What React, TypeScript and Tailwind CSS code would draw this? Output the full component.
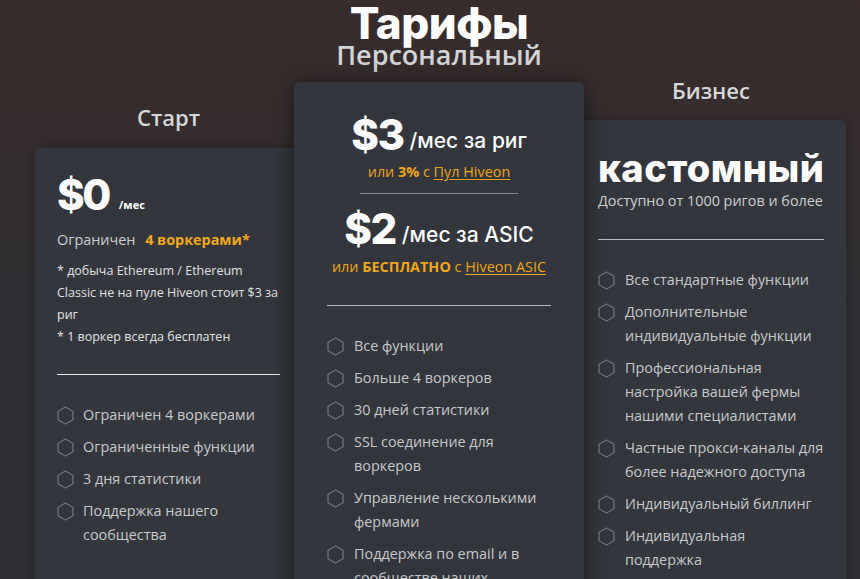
import React from 'react';

const Hex: React.FC = () => (
    <svg width="17" height="19" viewBox="0 0 17 19" className="shrink-0 mt-[3px]">
        <polygon points="8.5,1 16,5.2 16,13.8 8.5,18 1,13.8 1,5.2" fill="none" stroke="#74777d" strokeWidth="1.3" strokeLinejoin="round" />
    </svg>
);

const Features: React.FC<{ items: string[]; gap: string }> = ({ items, gap }) => (
    <ul className="flex flex-col gap-2">
        {items.map((t, i) => (
            <li key={i} className={`flex items-start ${gap} text-[14.4px] leading-6 text-[#c9cacc]`}>
                <Hex />
                <span>{t}</span>
            </li>
        ))}
    </ul>
);

const heading = { fontFamily: 'Inter, "Noto Sans", sans-serif' };

export default function App() {
    return (
        <div
            className="h-[579px] w-[860px] overflow-hidden bg-[linear-gradient(180deg,#382c2c_0%,#352d2e_25%,#2f3034_55%,#2e3034_100%)]"
            style={{ fontFamily: '"Open Sans", "Noto Sans", sans-serif' }}
        >
            <h1 className="pl-[18px] pt-[1px] text-center text-[44px] leading-[44px] font-extrabold text-white tracking-[-0.5px] -mb-[5px]" style={heading}>
                Тарифы
            </h1>

            <div className="flex items-start pl-[35px]">
                {/* Старт */}
                <div className="w-[267px] mt-[62px] flex flex-col">
                    <div className="text-center text-[22px] leading-[30px] font-semibold text-[#d6d7d9] mb-[16px]">Старт</div>
                    <div className="bg-[#33363c] rounded-md px-[22px] pt-[25px] pb-10 shadow-[0_0_14px_rgba(0,0,0,0.25)] h-[460px]">
                        <div className="flex items-end">
                            <span className="text-[42px] leading-[44px] font-extrabold text-white tracking-[-2.5px]" style={heading}>$0</span>
                            <span className="ml-[10px] mb-[4px] text-[11px] font-bold text-white">/мес</span>
                        </div>
                        <div className="mt-[13px] text-[14.4px] leading-5 text-[#cfd0d2]">
                            Ограничен <span className="ml-[6px] font-bold text-[#f7a81a]">4 воркерами*</span>
                        </div>
                        <div className="mt-[10px] text-[12.5px] leading-[22px] text-[#e2e3e4]">
                            <p>* добыча Ethereum / Ethereum Classic не на пуле Hiveon стоит $3 за риг</p>
                            <p>* 1 воркер всегда бесплатен</p>
                        </div>
                        <div className="mt-[26px] border-t border-[#e6e6e6]" />
                        <div className="mt-[28px]">
                            <Features
                                gap="gap-[9px]"
                                items={['Ограничен 4 воркерами', 'Ограниченные функции', '3 дня статистики', 'Поддержка нашего сообщества']}
                            />
                        </div>
                    </div>
                </div>

                {/* Персональный */}
                <div className="w-[290px] -ml-2 relative z-10 flex flex-col">
                    <div className="text-center text-[27px] leading-[30px] font-semibold text-[#d4d5d7] mb-[12px]">Персональный</div>
                    <div className="bg-[#33363c] rounded-md px-[33px] pt-[31px] pb-10 shadow-[0_0_22px_rgba(0,0,0,0.55)] h-[540px]">
                        <div className="flex items-end justify-center">
                            <span className="text-[42px] leading-[44px] font-extrabold text-white tracking-[-1.5px]" style={heading}>$3</span>
                            <span className="ml-[6px] mb-[4px] text-[21px] leading-6 font-medium text-white" style={heading}>/мес за риг</span>
                        </div>
                        <div className="mt-[6px] text-center text-[14.4px] leading-[18px] text-[#f2a516]">
                            или <b>3%</b> с <span className="underline underline-offset-2">Пул Hiveon</span>
                        </div>
                        <div className="mt-[12px] mx-auto w-[158px] border-t border-[#8a8b8e]" />
                        <div className="mt-[13px] flex items-end justify-center">
                            <span className="text-[42px] leading-[44px] font-extrabold text-white tracking-[-1.5px]" style={heading}>$2</span>
                            <span className="ml-[6px] mb-[4px] text-[21px] leading-6 font-medium text-white" style={heading}>/мес за ASIC</span>
                        </div>
                        <div className="mt-[7px] text-center text-[14.4px] leading-[18px] text-[#f2a516]">
                            или <b>БЕСПЛАТНО</b> с <span className="underline underline-offset-2">Hiveon ASIC</span>
                        </div>
                        <div className="mt-[29px] border-t border-[#b9babc]" />
                        <div className="mt-[28px]">
                            <Features
                                gap="gap-[10px]"
                                items={[
                                    'Все функции',
                                    'Больше 4 воркеров',
                                    '30 дней статистики',
                                    'SSL соединение для воркеров',
                                    'Управление несколькими фермами',
                                    'Поддержка по email и в сообществе наших пользователей',
                                ]}
                            />
                        </div>
                    </div>
                </div>

                {/* Бизнес */}
                <div className="w-[270px] -ml-2 mt-[35px] flex flex-col">
                    <div className="text-center text-[22px] leading-[30px] font-semibold text-[#d6d7d9] mb-[15px]">Бизнес</div>
                    <div className="bg-[#33363c] rounded-md px-[22px] pt-[28px] pb-10 shadow-[0_0_14px_rgba(0,0,0,0.25)] h-[500px]">
                        <div className="text-[38px] leading-[40px] font-extrabold text-white tracking-[0.5px]" style={heading}>кастомный</div>
                        <div className="mt-[3px] text-[14.4px] leading-5 text-[#cfd0d2]">Доступно от 1000 ригов и более</div>
                        <div className="mt-[28px] border-t border-[#b9babc]" />
                        <div className="mt-[28px]">
                            <Features
                                gap="gap-[10px]"
                                items={[
                                    'Все стандартные функции',
                                    'Дополнительные индивидуальные функции',
                                    'Профессиональная настройка вашей фермы нашими специалистами',
                                    'Частные прокси-каналы для более надежного доступа',
                                    'Индивидуальный биллинг',
                                    'Индивидуальная поддержка',
                                ]}
                            />
                        </div>
                    </div>
                </div>
            </div>
        </div>
    );
}
